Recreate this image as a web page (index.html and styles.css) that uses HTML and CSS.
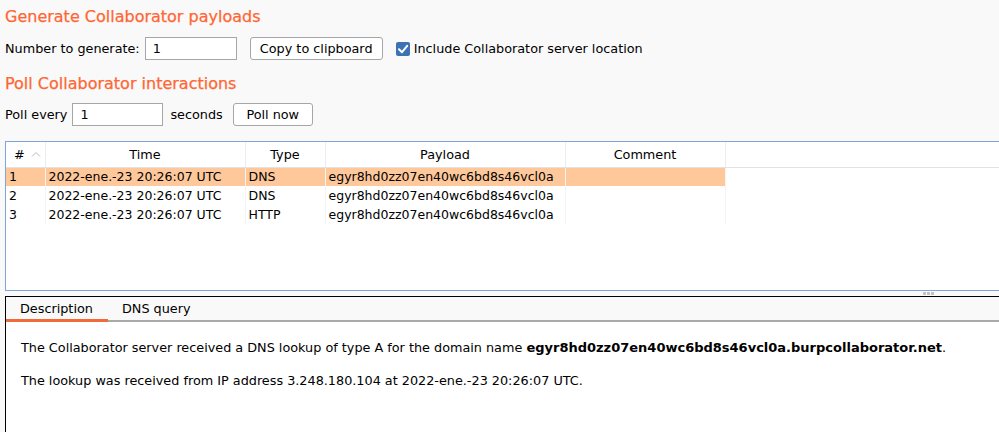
FILE: index.html
```html
<!DOCTYPE html>
<html>
<head>
<meta charset="utf-8">
<link rel="stylesheet" href="styles.css">
</head>
<body>
<div class="page">
  <section class="controls">
    <h2 class="heading">Generate Collaborator payloads</h2>
    <div class="row">
      <span class="label">Number to generate:</span>
      <input class="field field-gen" type="text" value="1">
      <button class="btn btn-copy">Copy to clipboard</button>
      <label class="check">
        <span class="box"><svg viewBox="0 0 14 14" width="14" height="14"><path d="M3 7.2 L6 10.2 L11.2 3.8" fill="none" stroke="#fff" stroke-width="2" stroke-linecap="round" stroke-linejoin="round"/></svg></span>
        <span>Include Collaborator server location</span>
      </label>
    </div>
    <h2 class="heading heading-2">Poll Collaborator interactions</h2>
    <div class="row row-poll">
      <span class="label">Poll every</span>
      <input class="field field-poll" type="text" value="1">
      <span class="label label-sec">seconds</span>
      <button class="btn btn-poll">Poll now</button>
    </div>
  </section>

  <section class="table-box">
    <table class="grid">
      <colgroup>
        <col class="c-num"><col class="c-time"><col class="c-type"><col class="c-payload"><col class="c-comment"><col>
      </colgroup>
      <thead>
        <tr>
          <th class="th-num"># <svg class="sort" viewBox="0 0 10 6" width="10" height="6"><path d="M1 5.5 L5 1.5 L9 5.5" fill="none" stroke="#b8b8b8" stroke-width="1"/></svg></th>
          <th>Time</th>
          <th>Type</th>
          <th>Payload</th>
          <th>Comment</th>
          <th class="th-fill"></th>
        </tr>
      </thead>
      <tbody>
        <tr class="sel"><td>1</td><td>2022-ene.-23 20:26:07 UTC</td><td>DNS</td><td>egyr8hd0zz07en40wc6bd8s46vcl0a</td><td></td><td class="fill"></td></tr>
        <tr><td>2</td><td>2022-ene.-23 20:26:07 UTC</td><td>DNS</td><td>egyr8hd0zz07en40wc6bd8s46vcl0a</td><td></td><td class="fill"></td></tr>
        <tr><td>3</td><td>2022-ene.-23 20:26:07 UTC</td><td>HTTP</td><td>egyr8hd0zz07en40wc6bd8s46vcl0a</td><td></td><td class="fill"></td></tr>
      </tbody>
    </table>
  </section>

  <div class="splitter"><span class="grip"></span><span class="grip"></span><span class="grip"></span></div>

  <section class="detail">
    <div class="tabs">
      <div class="tab active">Description</div>
      <div class="tab">DNS query</div>
    </div>
    <div class="detail-body">
      <p>The Collaborator server received a DNS lookup of type A for the domain name <b>egyr8hd0zz07en40wc6bd8s46vcl0a.burpcollaborator.net</b>.</p>
      <p>The lookup was received from IP address 3.248.180.104 at 2022-ene.-23 20:26:07 UTC.</p>
    </div>
  </section>
</div>
</body>
</html>
```

FILE: styles.css
```css
* { box-sizing: border-box; }
html, body { margin: 0; padding: 0; }
body {
  background: #f9f9f9;
  font-family: "DejaVu Sans", "Liberation Sans", sans-serif;
  font-size: 12.8px;
  color: #000;
  overflow: hidden;
  width: 999px;
  height: 432px;
}
.page { display: flex; flex-direction: column; }

.controls { padding: 0 0 0 5px; }
.heading {
  margin: 0;
  font-size: 16px;
  font-weight: normal;
  color: #ff6633;
  height: 23px;
  padding-top: 7px;
  line-height: 20px;
  -webkit-text-stroke: 0.25px #ff6633;
}
.heading-2 { padding-top: 14px; height: 42px; line-height: 20px; }
.row {
  display: flex;
  align-items: center;
  height: 23px;
  margin-top: 14px;
}
.row-poll { margin-top: 1px; }
.label { white-space: nowrap; }
.field {
  height: 23px;
  border: 1px solid #a6a6a6;
  background: #fff;
  font: inherit;
  padding: 0 7px;
  outline: none;
}
.field-gen { width: 92px; margin-left: 5px; }
.field-poll { width: 91px; margin-left: 5px; }
.label-sec { margin-left: 7px; }
.btn {
  height: 23px;
  border: 1px solid #a6a6a6;
  border-radius: 3px;
  background: #fff;
  font: inherit;
  color: #000;
  padding: 0;
}
.btn-copy { width: 133px; margin-left: 13px; }
.btn-poll { width: 80px; margin-left: 10px; }
.check { display: flex; align-items: center; margin-left: 13px; gap: 4px; }
.box {
  width: 14px; height: 14px;
  border-radius: 2px;
  background: #3d72b4;
  display: inline-flex;
}

.table-box {
  margin: 15px 0 0 5px;
  height: 150px;
  background: #fff;
  border-top: 1px solid #7ea6d8;
  border-left: 1px solid #7ea6d8;
  border-bottom: 1px solid #7ea6d8;
  font-size: 12.5px;
}
.grid {
  border-collapse: collapse;
  table-layout: fixed;
  width: 994px;
}
.c-num { width: 39px; }
.c-time { width: 200px; }
.c-type { width: 80px; }
.c-payload { width: 240px; }
.c-comment { width: 160px; }
.grid th {
  height: 25px;
  font-weight: normal;
  font-size: 12.8px;
  text-align: center;
  border-right: 1px solid #ececec;
  border-bottom: 1px solid #e2e2e2;
  padding: 0;
}
.grid th.th-num { text-align: left; padding-left: 8px; }
.grid th.th-fill { border-right: none; }
.sort { vertical-align: 2px; margin-left: 2px; }
.grid td {
  height: 19px;
  padding: 0 0 0 3px;
  white-space: nowrap;
  border-right: 1px solid #f4f4f4;
}
.grid td.fill { background: #fff; border-right: none; }
.grid tr.sel td { background: #ffc89b; }
.grid tr.sel td.fill { background: #fff; }

.splitter {
  height: 5px;
  display: flex;
  justify-content: flex-end;
  align-items: flex-start;
  gap: 1px;
  padding: 1px 65px 0 0;
}
.grip { width: 3px; height: 3px; background: #c2c2c2; }

.detail {
  margin-left: 5px;
  border-top: 1px solid #000;
  border-left: 1px solid #000;
  background: #fff;
  height: 140px;
}
.tabs {
  display: flex;
  height: 25px;
  background: #f9f9f9;
  border-bottom: 2px solid #a9a9a9;
}
.tab {
  padding: 4px 15px 0 14px;
  height: 25px;
  line-height: 16px;
}
.tab.active {
  width: 102px;
  border-bottom: 3px solid #f06a3c;
  margin-bottom: -2px;
}
.detail-body { padding: 10px 0 0 15px; font-size: 12.8px; }
.detail-body p { margin: 8px 0 17px; line-height: 16px; }
.detail-body b { font-weight: bold; font-size: 13px; }
```
